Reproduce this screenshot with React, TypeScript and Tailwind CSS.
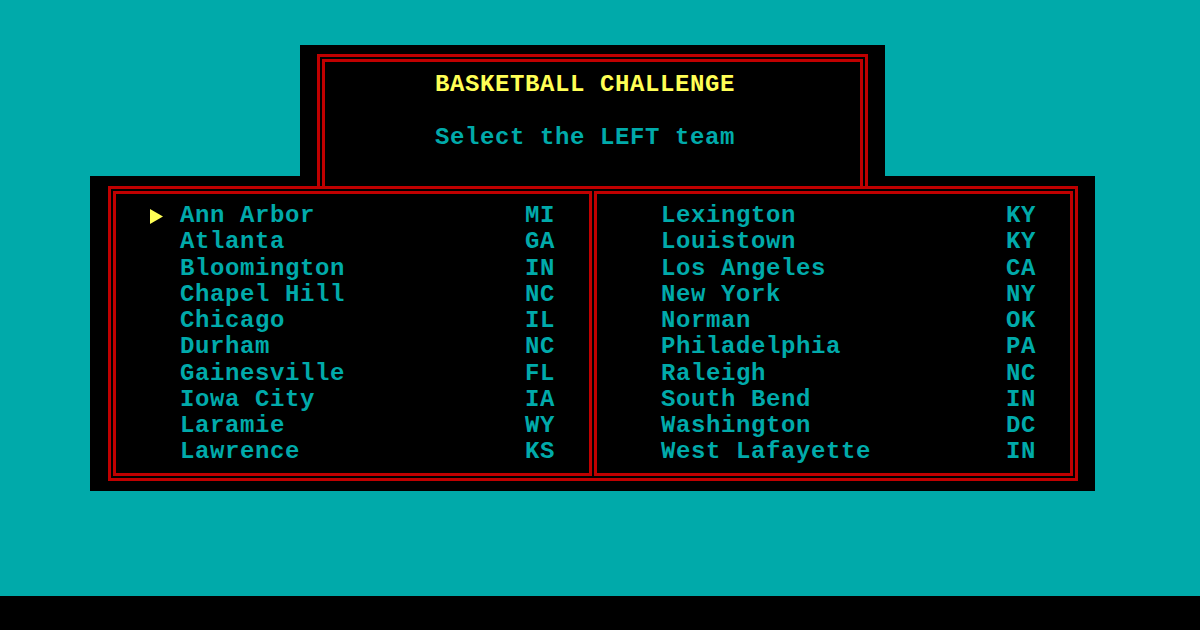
const LEFT_TEAMS: [string, string][] = [
  ["Ann Arbor", "MI"],
  ["Atlanta", "GA"],
  ["Bloomington", "IN"],
  ["Chapel Hill", "NC"],
  ["Chicago", "IL"],
  ["Durham", "NC"],
  ["Gainesville", "FL"],
  ["Iowa City", "IA"],
  ["Laramie", "WY"],
  ["Lawrence", "KS"],
];

const RIGHT_TEAMS: [string, string][] = [
  ["Lexington", "KY"],
  ["Louistown", "KY"],
  ["Los Angeles", "CA"],
  ["New York", "NY"],
  ["Norman", "OK"],
  ["Philadelphia", "PA"],
  ["Raleigh", "NC"],
  ["South Bend", "IN"],
  ["Washington", "DC"],
  ["West Lafayette", "IN"],
];

function Pointer() {
  return (
    <svg width="13" height="15" viewBox="0 0 13 15" className="block">
      <polygon points="0,0 13,7.5 0,15" fill="#FFFF55" />
    </svg>
  );
}

function TeamColumn({
  teams,
  selected,
}: {
  teams: [string, string][];
  selected?: number;
}) {
  return (
    <div className="h-full border-[3px] border-[#C00000] pl-[34px] pt-[9px]">
      {teams.map(([city, state], i) => (
        <div key={city} className="flex h-[26.25px] items-center">
          <div className="flex w-[30px] items-center">
            {selected === i && <Pointer />}
          </div>
          <span className="w-[345px] whitespace-pre">{city}</span>
          <span className="whitespace-pre">{state}</span>
        </div>
      ))}
    </div>
  );
}

export default function App() {
  return (
    <div className="flex h-[630px] w-[1200px] flex-col bg-[#00AAAA] pt-[45px] font-['Liberation_Mono',monospace] text-[24px] font-bold leading-[26.25px] tracking-[0.6px] text-[#00AAAA]">
      {/* title box */}
      <div className="ml-[300px] h-[131px] w-[585px] bg-black pl-[17px] pr-[17px] pt-[9px]">
        <div className="h-full border-x-[3px] border-t-[3px] border-[#C00000] px-[2px] pt-[2px]">
          <div className="h-full border-x-[3px] border-t-[3px] border-[#C00000] pl-[110px] pt-[10px]">
            <p className="whitespace-pre text-[#FFFF55]">BASKETBALL CHALLENGE</p>
            <p className="mt-[26.25px] whitespace-pre">Select the LEFT team</p>
          </div>
        </div>
      </div>

      {/* team list */}
      <div className="ml-[90px] h-[315px] w-[1005px] bg-black pl-[18px] pr-[17px]">
        <div className="ml-[209px] h-[10px] w-[551px] border-x-[3px] border-[#C00000] px-[2px]">
          <div className="h-full border-x-[3px] border-[#C00000]" />
        </div>
        <div className="h-[295px] border-[3px] border-[#C00000] p-[2px]">
          <div className="grid h-full grid-cols-2 gap-[2px]">
            <TeamColumn teams={LEFT_TEAMS} selected={0} />
            <TeamColumn teams={RIGHT_TEAMS} />
          </div>
        </div>
      </div>

      <div className="mt-auto h-[34px] bg-black" />
    </div>
  );
}
